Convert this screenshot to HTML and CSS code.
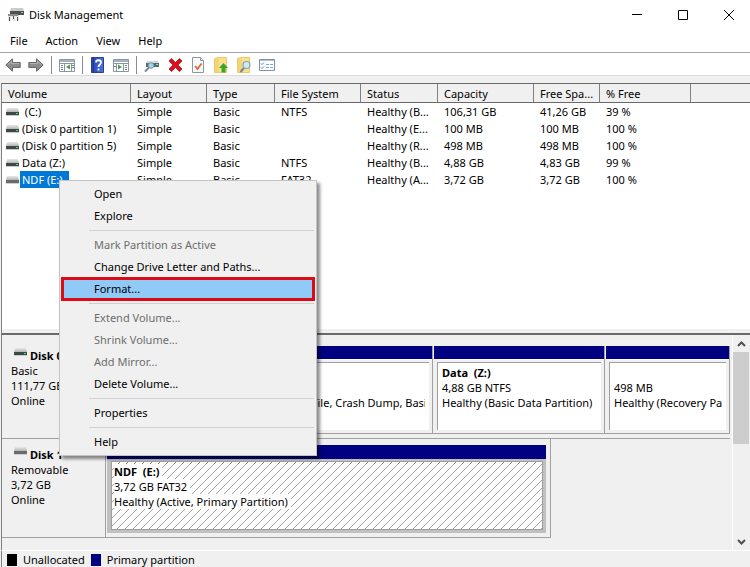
FILE: index.html
```html
<!DOCTYPE html>
<html lang="en">
<head>
<meta charset="utf-8">
<title>Disk Management</title>
<link rel="stylesheet" href="styles.css">
</head>
<body>
<svg class="defs" width="0" height="0" aria-hidden="true">
  <defs>
    <linearGradient id="lid" x2="0" y2="1"><stop offset="0" stop-color="#e8e8e8"/><stop offset="1" stop-color="#b4b4b4"/></linearGradient>
    <linearGradient id="blue" x2="1" y2="0"><stop offset="0" stop-color="#2a45a8"/><stop offset=".25" stop-color="#2f50c0"/><stop offset="1" stop-color="#4a74dc"/></linearGradient>
    <symbol id="drive" viewBox="0 0 13 8"><path d="M1 0h11l1 4H0z" fill="url(#lid)"/><path d="M0 4h13v3H0z" fill="#3c4a46"/><path d="M10 5h2v1h-2z" fill="#4be07c"/><path d="M0 7h13v1H0z" fill="#c9c9c9"/></symbol>
    <symbol id="removable" viewBox="0 0 13 8"><path d="M1 0h11l1 4H0z" fill="url(#lid)"/><path d="M0 4h13v3H0z" fill="#6b6b6b"/><path d="M0 7h13v1H0z" fill="#cfcfcf"/></symbol>
    <symbol id="arrow" viewBox="0 0 16 16"><path d="M.8 8 7.5 1.8v3.7h7.7v5H7.500v3.700z" fill="#8c8c8c" stroke="#686868"/><path d="M3 7.500 6.500 4.300v2.300h7.500" fill="none" stroke="#b5b5b5"/></symbol>
  </defs>
</svg>
<div class="window">
  <header class="titlebar">
    <svg class="app-icon" width="16" height="16" viewBox="0 0 16 16"><path d="M3 1h12l1 3H2z" fill="#c9cccc"/><path d="M2 4h14v4H2z" fill="#4b5050"/><path d="M13 5h2v1h-2z" fill="#6fdc8c"/><path d="M0 8h11v6H0z" fill="#e2e4e5"/><path d="M0 7h10v2H0z" fill="#8a8a8a"/><path d="M1 10h1v4H1zM5 9h1v3H5zM9 10h1v4H9z" fill="#555"/><path d="M3 10h2v4H3zM7 10h2v4H7z" fill="#f4f4f4"/></svg>
    <h1>Disk Management</h1>
    <div class="controls">
      <button aria-label="Minimize"><svg width="10" height="10" viewBox="0 0 10 10"><path d="M0 4.500h10" stroke="#000"/></svg></button>
      <button aria-label="Maximize"><svg width="10" height="10" viewBox="0 0 10 10"><path d="M.5.5h9v9h-9z" fill="none" stroke="#000"/></svg></button>
      <button aria-label="Close"><svg width="10" height="10" viewBox="0 0 10 10"><path d="m0 0 10 10M10 0 0 10" stroke="#000"/></svg></button>
    </div>
  </header>
  <nav class="menubar"><button>File</button><button>Action</button><button>View</button><button>Help</button></nav>
  <div class="toolbar">
    <button aria-label="Back"><svg viewBox="0 0 16 16"><use href="#arrow"/></svg></button>
    <button aria-label="Forward"><svg viewBox="0 0 16 16"><use href="#arrow" transform="matrix(-1 0 0 1 16 0)"/></svg></button>
    <span class="sep"></span>
    <button aria-label="Show console tree"><svg viewBox="0 0 16 16"><path d="M.5 2.500h15v12H.5z" fill="#fff" stroke="#8795a5"/><path d="M1 3h14v2H1z" fill="#a7b2bf"/><path d="M1 6.500h14M5.500 7v7M12.500 7v7" stroke="#8795a5"/><path d="M2 8.500h2M2 10.500h2M2 12.500h2M13 8.500h2M13 10.500h2" stroke="#72849b"/><path d="M11 7.500v5L7 10z" fill="#4ba53c"/></svg></button>
    <span class="sep"></span>
    <button aria-label="Help topics"><svg viewBox="0 0 16 16"><path d="M1.500.5h12v15h-12z" fill="url(#blue)" stroke="#2b3f94"/><path d="M3.500 1v14" stroke="#22388f"/><path d="M6 5.500C6 2.500 11 2.500 11 5.500 11 7.500 8.500 7.500 8.500 10M8.500 11.500v2" fill="none" stroke="#fff" stroke-width="1.800"/></svg></button>
    <button aria-label="Show action pane"><svg viewBox="0 0 16 16"><path d="M.5 2.500h15v12H.5z" fill="#fff" stroke="#8795a5"/><path d="M1 3h14v2H1z" fill="#a7b2bf"/><path d="M1 6.500h14M3.500 7v7M10.500 7v7" stroke="#8795a5"/><path d="M12 8.500h2M12 10.500h2M12 12.500h2M1 9.500h2" stroke="#72849b"/><path d="M5 7.500v5L9 10z" fill="#4ba53c"/></svg></button>
    <span class="sep"></span>
    <button aria-label="Rescan disks"><svg viewBox="0 0 16 16"><path d="M3 4h11l1 2H2z" fill="#d4dadd"/><path d="M2 6h13v4H2z" fill="#526b73"/><path d="M12 7h2v1h-2z" fill="#8dec9d"/><circle cx="7" cy="8.500" r="2.800" fill="#a9d2e8" stroke="#7894a4"/><path d="m5 10.500-4 4" stroke="#758894" stroke-width="2"/></svg></button>
    <button aria-label="Delete"><svg viewBox="0 0 16 16"><path d="m2 4 2.500-2.500 4 4 4-4L15 4l-4 4 4 4-2.500 2.500-4-4-4 4L2 12l4-4z" fill="#d9121d" stroke="#b00a15" stroke-width=".8"/></svg></button>
    <button aria-label="Properties"><svg viewBox="0 0 16 16"><path d="M2.500.5h8l3 3v12h-11z" fill="#f8f9fa" stroke="#8e969e"/><path d="M10.500.5v3h3" fill="#d8dde2" stroke="#8e969e"/><path d="m5 9 2.500 3L11.500 6.500" fill="none" stroke="#e0693a" stroke-width="1.800"/></svg></button>
    <button aria-label="Open folder"><svg viewBox="0 0 16 16"><path d="M1.500 1.500 5 .5h8.500v15h-12z" fill="#fae18b" stroke="#ebc869"/><path d="M2 2h4v13H2z" fill="#f4d476"/><path d="M10.500 6 15 11h-2.500v4.500h-4V11H6z" fill="#38a62e"/></svg></button>
    <button aria-label="Search folder"><svg viewBox="0 0 16 16"><path d="M1.500 1.500 5 .5h8.500v15h-12z" fill="#fae18b" stroke="#ebc869"/><path d="M2 2h4v13H2z" fill="#f4d476"/><path d="m8 11-3.500 4" stroke="#77838d" stroke-width="2"/><circle cx="10.500" cy="8" r="3.500" fill="#d3e9f4" stroke="#7fa6bd" stroke-width="1.200"/></svg></button>
    <button aria-label="View options"><svg viewBox="0 0 16 16"><path d="M.5 2.500h15v11H.5z" fill="#fff" stroke="#7d90a6"/><path d="M1 3h14v1H1z" fill="#b3c1cf"/><path d="m2 6.500 1 1 2-2M2 10.500l1 1 2-2" fill="none" stroke="#3c85c7"/><path d="M7 7.500h3M11 7.500h3M7 10.500h3M11 10.500h3" stroke="#78aad6"/></svg></button>
  </div>

  <main class="panes">
    <section class="volumes">
      <table>
        <colgroup><col class="c-volume"><col class="c-layout"><col class="c-type"><col class="c-fs"><col class="c-status"><col class="c-capacity"><col class="c-space"><col class="c-free"><col></colgroup>
        <thead><tr><th>Volume</th><th>Layout</th><th>Type</th><th>File System</th><th>Status</th><th>Capacity</th><th>Free Spa...</th><th>% Free</th><th></th></tr></thead>
        <tbody>
          <tr><td><span class="vol"><svg><use href="#drive"/></svg><span class="name">&nbsp;(C:)</span></span></td><td>Simple</td><td>Basic</td><td>NTFS</td><td>Healthy (B...</td><td>106,31 GB</td><td>41,26 GB</td><td>39 %</td><td></td></tr>
          <tr><td><span class="vol"><svg><use href="#drive"/></svg><span class="name">(Disk 0 partition 1)</span></span></td><td>Simple</td><td>Basic</td><td></td><td>Healthy (E...</td><td>100 MB</td><td>100 MB</td><td>100 %</td><td></td></tr>
          <tr><td><span class="vol"><svg><use href="#drive"/></svg><span class="name">(Disk 0 partition 5)</span></span></td><td>Simple</td><td>Basic</td><td></td><td>Healthy (R...</td><td>498 MB</td><td>498 MB</td><td>100 %</td><td></td></tr>
          <tr><td><span class="vol"><svg><use href="#drive"/></svg><span class="name">Data (Z:)</span></span></td><td>Simple</td><td>Basic</td><td>NTFS</td><td>Healthy (B...</td><td>4,88 GB</td><td>4,83 GB</td><td>99 %</td><td></td></tr>
          <tr><td><span class="vol"><svg><use href="#removable"/></svg><span class="name selected">NDF (E:)</span></span></td><td>Simple</td><td>Basic</td><td>FAT32</td><td>Healthy (A...</td><td>3,72 GB</td><td>3,72 GB</td><td>100 %</td><td></td></tr>
        </tbody>
      </table>
    </section>
    <div class="splitter"></div>
    <section class="graph">
      <div class="disks">
        <div class="disk">
          <div class="label"><h2><svg><use href="#drive"/></svg>Disk 0</h2><p>Basic</p><p>111,77 GB</p><p>Online</p></div>
          <div class="parts four">
            <div class="part"><div class="bar"></div><div class="box"></div></div>
            <div class="part"><div class="bar"></div><div class="box"><h3>(C:)</h3><p>106,31 GB NTFS</p><p>Healthy (Boot, Page File, Crash Dump, Basic Data Partition)</p></div></div>
            <div class="part"><div class="bar"></div><div class="box"><h3>Data&nbsp; (Z:)</h3><p>4,88 GB NTFS</p><p>Healthy (Basic Data Partition)</p></div></div>
            <div class="part"><div class="bar"></div><div class="box"><h3>&nbsp;</h3><p>498 MB</p><p>Healthy (Recovery Partition)</p></div></div>
          </div>
        </div>
        <div class="disk">
          <div class="label"><h2><svg><use href="#removable"/></svg>Disk 1</h2><p>Removable</p><p>3,72 GB</p><p>Online</p></div>
          <div class="parts single">
            <div class="part active"><div class="bar"></div><div class="frame"><div class="box hatched"><h3><span>NDF&nbsp; (E:)</span></h3><p><span>3,72 GB FAT32</span></p><p><span>Healthy (Active, Primary Partition)</span></p></div></div></div>
          </div>
        </div>
      </div>
      <div class="scrollbar">
        <button aria-label="Scroll up"><svg width="9" height="6" viewBox="0 0 9 6"><path d="m1 5 3.500-3.500L8 5" fill="none" stroke="#505050" stroke-width="2"/></svg></button>
        <div class="track"><div class="thumb"></div></div>
        <button aria-label="Scroll down"><svg width="9" height="6" viewBox="0 0 9 6"><path d="m1 1 3.500 3.500L8 1" fill="none" stroke="#505050" stroke-width="2"/></svg></button>
      </div>
    </section>
    <footer class="legend"><i class="swatch black"></i>Unallocated<i class="swatch navy"></i>Primary partition</footer>
  </main>

  <div class="context-menu" role="menu">
    <button role="menuitem">Open</button>
    <button role="menuitem">Explore</button>
    <hr>
    <button role="menuitem" disabled>Mark Partition as Active</button>
    <button role="menuitem">Change Drive Letter and Paths...</button>
    <button role="menuitem" class="current">Format...</button>
    <hr>
    <button role="menuitem" disabled>Extend Volume...</button>
    <button role="menuitem" disabled>Shrink Volume...</button>
    <button role="menuitem" disabled>Add Mirror...</button>
    <button role="menuitem">Delete Volume...</button>
    <hr>
    <button role="menuitem">Properties</button>
    <hr>
    <button role="menuitem">Help</button>
  </div>
</div>
</body>
</html>
```
FILE: styles.css
```css
* { box-sizing: border-box; }
body { margin: 0; background: #fff; color: #000; font: 11px/15px "Noto Sans", "Open Sans", sans-serif; }
h1, h2, h3, p { margin: 0; font-size: inherit; font-weight: normal; }
button { margin: 0; padding: 0; border: 0; background: none; color: inherit; font: inherit; }
.defs { position: absolute; }
.window { position: relative; display: flex; flex-direction: column; height: 100vh; overflow: hidden; }

/* Title bar and menus */
.titlebar { display: flex; align-items: center; height: 29px; flex: none; padding-left: 8px; gap: 5px; }
.titlebar h1 { flex: 1; }
.controls { display: flex; gap: 4px; }
.controls button { display: flex; align-items: center; justify-content: center; width: 42px; height: 28px; }
.menubar { display: flex; gap: 18px; height: 24px; flex: none; padding-left: 10px; border-bottom: 1px solid #a5a5a5; }
.toolbar { display: flex; align-items: center; gap: 7px; height: 23px; flex: none; padding: 2px 0 0 5px; border-bottom: 1px solid #dcdcdc; }
.toolbar button, .toolbar svg { display: block; width: 16px; height: 16px; }
.sep { width: 1px; height: 18px; background: #8c8c8c; }

/* Main panes */
.panes { display: flex; flex-direction: column; flex: 1; min-height: 0; padding-top: 7px; padding-left: 1px; background: #f0f0f0; }
.volumes { flex: 1; min-height: 0; overflow: hidden; border-top: 1px solid #696969; border-left: 1px solid #808080; background: #fff; }
table { width: 100%; table-layout: fixed; border-collapse: separate; border-spacing: 0; }
.c-volume { width: 129px; }
.c-layout { width: 76px; }
.c-type { width: 68px; }
.c-fs { width: 86px; }
.c-status { width: 77px; }
.c-capacity { width: 96px; }
.c-space { width: 66px; }
.c-free { width: 91px; }
th, td { padding: 0 0 0 6px; text-align: left; font-weight: normal; white-space: nowrap; overflow: hidden; }
th { height: 19px; background: #f0f0f0; border-right: 1px solid #808080; border-bottom: 1px solid #696969; }
th:last-child { border-right: 0; }
td { height: 17px; }
td:first-child { padding-left: 4px; }
.vol { display: flex; align-items: center; gap: 1px; line-height: 17px; }
.vol svg, .label svg { width: 13px; height: 8px; flex: none; }
.name { padding: 0 6px 0 2px; }
.selected { background: #0078d7; color: #fff; }
.splitter { height: 6px; flex: none; border-bottom: 2px solid #696969; border-left: 1px solid #808080; }

/* Disk graph */
.graph { display: flex; flex: none; border-left: 1px solid #808080; border-bottom: 1px solid #fff; }
.disks { flex: 1; min-width: 0; padding: 5px 0 12px; border-right: 1px solid #fff; }
.disk { display: flex; }
.label { width: 104px; height: 99px; flex: none; padding: 8px 0 0 9px; border-right: 1px solid #a0a0a0; border-bottom: 1px solid #a0a0a0; }
.label h2, h3 { font-weight: bold; }
.label h2 { display: flex; gap: 3px; padding-left: 3px; }
.parts { display: grid; min-width: 0; padding-top: 6px; }
.four { flex: 1; margin-right: 2px; grid-template-columns: 92fr 235fr 172fr 125fr; border-bottom: 1px solid #a0a0a0; padding-bottom: 4px; }
.single { width: 61%; padding-right: 4px; padding-bottom: 4px; border-right: 1px solid #a0a0a0; border-bottom: 1px solid #a0a0a0; }
.part { display: flex; flex-direction: column; min-width: 0; padding-left: 1px; border-right: 1px solid #a0a0a0; border-bottom: 1px solid #a0a0a0; }
.bar { height: 14px; border-bottom: 1px solid #fff; background: #000080; }
.box { flex: 1; min-width: 0; margin: 2px 3px 3px; padding: 2px 4px 0; overflow: hidden; border-top: 1px solid #a0a0a0; border-left: 1px solid #a0a0a0; background: #fff; }
.box p, .box h3 { white-space: nowrap; overflow: hidden; }
.active { border: 0; }
.active .bar { border: 0; }
.frame { display: flex; flex: 1; padding: 2px 3px 3px 4px; background: #c0c0c0; }
.hatched { margin: 0; padding: 2px; border: 1px solid #a0a0a0; background: linear-gradient(135deg, #fff 46%, #a0a0a0 48%, #a0a0a0 52%, #fff 54%) 0 0 / 8px 8px; }
.hatched span { display: inline-block; padding-right: 3px; background: #fff; }

/* Scroll bar */
.scrollbar { display: flex; flex-direction: column; width: 17px; flex: none; padding-right: 1px; }
.scrollbar button { display: flex; align-items: center; justify-content: center; height: 17px; }
.track { flex: 1; }
.thumb { height: 51%; background: #cdcdcd; }

.legend { display: flex; align-items: center; gap: 6px; height: 16px; flex: none; padding: 1px 0 0 5px; border-left: 1px solid #808080; }
.swatch { width: 10px; height: 12px; }
.black { background: #000; }
.navy { background: #000080; }

/* Context menu */
.context-menu { position: absolute; left: 59px; top: 180px; width: 258px; padding: 2px; border: 1px solid #c4c4c4; background: #f0f0f0; box-shadow: 3px 3px 3px rgba(0, 0, 0, .45); }
.context-menu button { display: block; width: 100%; height: 22px; padding: 0 0 2px 32px; text-align: left; }
.context-menu button:disabled { color: #6d6d6d; }
.context-menu hr { height: 1px; margin: 3px 0 3px 27px; border: 0; background: #d0d0d0; }
.context-menu .current { background: #91c9f7; outline: 3px solid #dc0a14; outline-offset: -2px; }
```
